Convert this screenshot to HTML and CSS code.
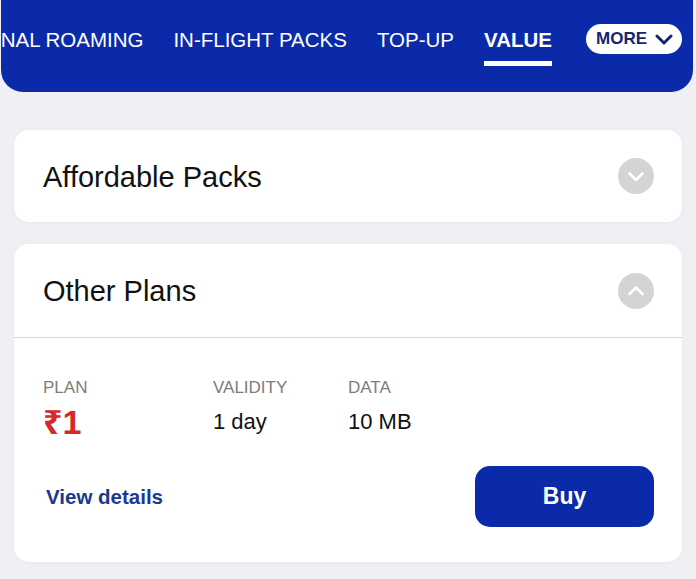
FILE: index.html
```html
<!DOCTYPE html>
<html lang="en">
<head>
<meta charset="utf-8">
<title>Value packs</title>
<link rel="stylesheet" href="styles.css">
</head>
<body>
<header class="topbar">
  <nav class="tabs">
    <a class="tab">INTERNATIONAL ROAMING</a>
    <a class="tab">IN-FLIGHT PACKS</a>
    <a class="tab">TOP-UP</a>
    <a class="tab tab-active">VALUE</a>
  </nav>
  <button class="more">MORE
    <svg class="more-chev" viewBox="0 0 18 11" width="18" height="11"><path d="M2 2 L9 9 L16 2" fill="none" stroke="currentColor" stroke-width="3" stroke-linecap="round" stroke-linejoin="round"/></svg>
  </button>
</header>

<main class="content">
  <section class="card">
    <div class="card-head">
      <h2 class="card-title">Affordable Packs</h2>
      <span class="toggle">
        <svg viewBox="0 0 36 36" width="36" height="36"><path d="M11.5 15.5 L18 22 L24.5 15.5" fill="none" stroke="#fff" stroke-width="2.6" stroke-linecap="round" stroke-linejoin="round"/></svg>
      </span>
    </div>
  </section>

  <section class="card">
    <div class="card-head card-head-open">
      <h2 class="card-title">Other Plans</h2>
      <span class="toggle">
        <svg viewBox="0 0 36 36" width="36" height="36"><path d="M11.5 21 L18 14.5 L24.5 21" fill="none" stroke="#fff" stroke-width="2.6" stroke-linecap="round" stroke-linejoin="round"/></svg>
      </span>
    </div>
    <div class="plan">
      <div class="plan-grid">
        <span class="label">PLAN</span>
        <span class="label">VALIDITY</span>
        <span class="label">DATA</span>
        <span class="price">₹1</span>
        <span class="value">1 day</span>
        <span class="value">10 MB</span>
      </div>
      <div class="plan-foot">
        <a class="details">View details</a>
        <button class="buy">Buy</button>
      </div>
    </div>
  </section>
</main>
</body>
</html>
```

FILE: styles.css
```css
* { box-sizing: border-box; }

html, body {
  margin: 0;
  padding: 0;
}

body {
  background: #eef0f4;
  font-family: "Liberation Sans", "Noto Sans", "DejaVu Sans", sans-serif;
  color: #111;
  width: 696px;
  height: 579px;
  overflow: hidden;
}

.topbar {
  height: 92px;
  margin: 0 3px 0 1px;
  background: #0b2aa9;
  border-radius: 0 0 22px 22px;
  display: flex;
  align-items: flex-start;
  padding: 24px 11px 0 0;
}

.tabs {
  flex: 1;
  min-width: 0;
  overflow: hidden;
  display: flex;
  justify-content: flex-end;
  gap: 30px;
}

.tab {
  flex: none;
  color: #fff;
  font-size: 20.5px;
  line-height: 32px;
  white-space: nowrap;
  text-decoration: none;
}

.tab-active {
  font-weight: bold;
  border-bottom: 5px solid #fff;
  padding-bottom: 5px;
}

.more {
  flex: none;
  margin-left: 34px;
  height: 30px;
  border: none;
  border-radius: 15px;
  background: #fff;
  color: #15266e;
  font-family: inherit;
  font-weight: bold;
  font-size: 17px;
  padding: 0 9px 0 10px;
  display: flex;
  align-items: center;
  gap: 8px;
}

.more-chev { display: block; }

.content {
  padding: 38px 14px 0 14px;
  display: flex;
  flex-direction: column;
  gap: 22px;
}

.card {
  background: #fff;
  border-radius: 15px;
  box-shadow: 0 1px 4px rgba(0, 0, 0, 0.04);
  overflow: hidden;
}

.card-head {
  height: 92px;
  display: flex;
  align-items: center;
  justify-content: space-between;
  padding: 0 28px 0 29px;
}

.card-head-open {
  height: 94px;
  border-bottom: 1.5px solid #d6d6d8;
}

.card-title {
  margin: 0;
  font-size: 29px;
  font-weight: normal;
  color: #111;
  padding-top: 2px;
}

.toggle {
  width: 36px;
  height: 36px;
  border-radius: 50%;
  background: #d4d4d7;
  display: flex;
}

.toggle svg { display: block; }

.plan {
  padding: 40px 28px 35px 29px;
}

.plan-grid {
  display: grid;
  grid-template-columns: 170px 135px 1fr;
  grid-template-rows: 20px 36px;
  row-gap: 6px;
  align-items: center;
}

.label {
  font-size: 17px;
  color: #7c7c7e;
  line-height: 20px;
}

.price {
  font-size: 34px;
  font-weight: bold;
  color: #d62a2a;
  line-height: 36px;
}

.value {
  font-size: 22px;
  line-height: 36px;
  color: #111;
}

.plan-foot {
  margin-top: 26px;
  display: flex;
  align-items: center;
  justify-content: space-between;
}

.details {
  font-size: 20.5px;
  font-weight: bold;
  color: #1b3892;
  padding-left: 3px;
}

.buy {
  width: 179px;
  height: 61px;
  border: none;
  border-radius: 15px;
  background: #0b2aa9;
  color: #fff;
  font-family: inherit;
  font-size: 23px;
  font-weight: bold;
}
```
